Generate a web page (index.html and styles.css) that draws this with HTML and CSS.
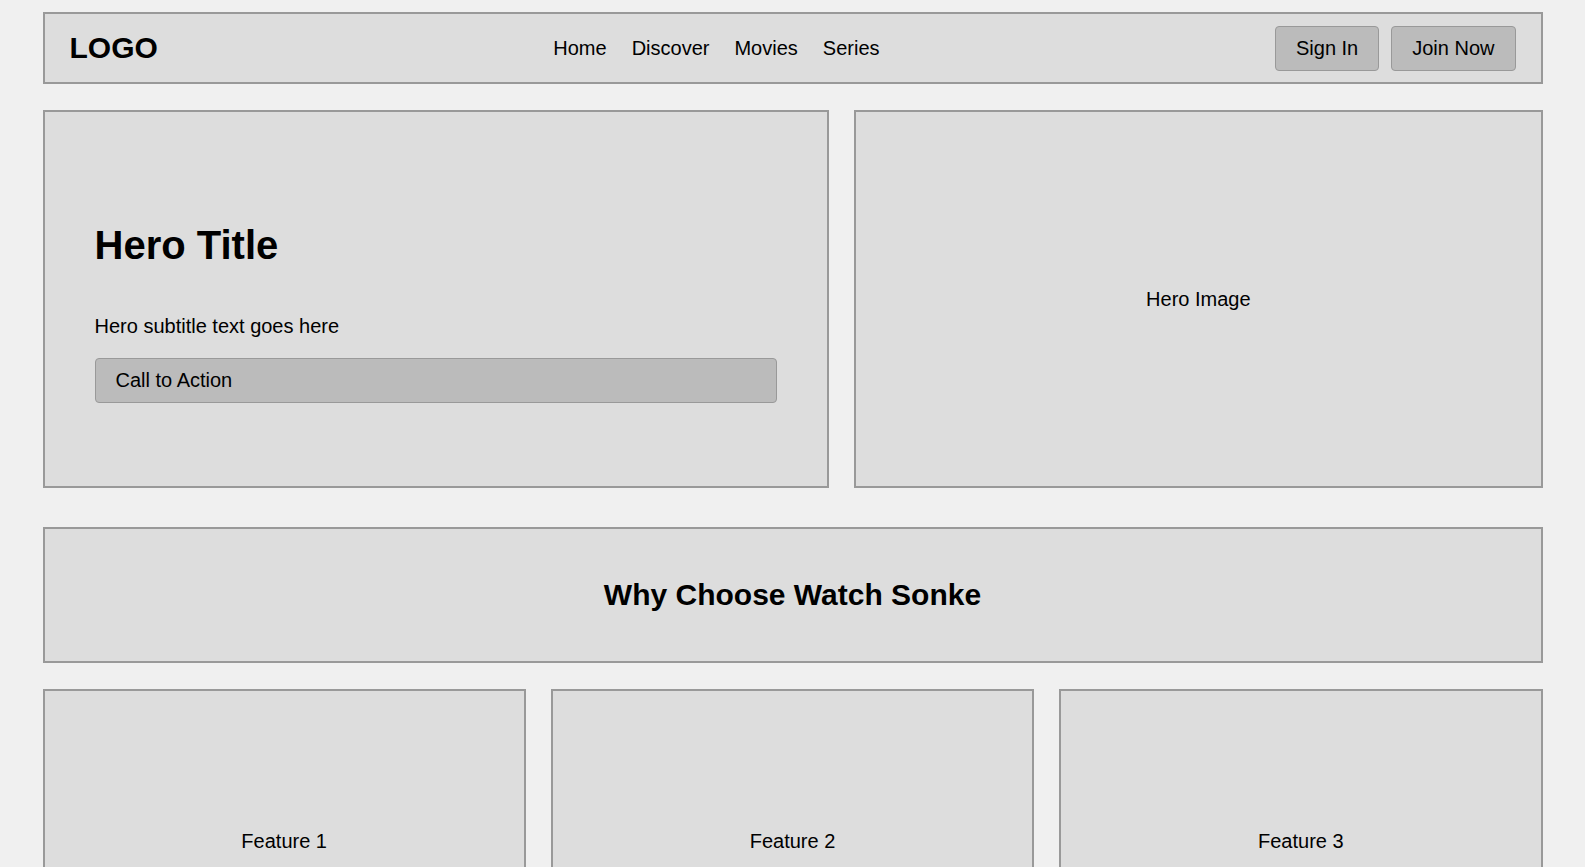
FILE: index.html
```html
<!DOCTYPE html>
<html lang="en">
<head>
<meta charset="utf-8">
<title>Watch Sonke</title>
<link rel="stylesheet" href="styles.css">
</head>
<body>
<div class="page">
  <header class="header">
    <div class="logo">LOGO</div>
    <nav class="nav">
      <a class="nav-link" href="#">Home</a>
      <a class="nav-link" href="#">Discover</a>
      <a class="nav-link" href="#">Movies</a>
      <a class="nav-link" href="#">Series</a>
    </nav>
    <div class="auth">
      <button class="btn">Sign In</button>
      <button class="btn">Join Now</button>
    </div>
  </header>

  <section class="hero">
    <div class="box hero-text">
      <h1 class="hero-title">Hero Title</h1>
      <p class="hero-sub">Hero subtitle text goes here</p>
      <button class="btn cta">Call to Action</button>
    </div>
    <div class="box hero-image">Hero Image</div>
  </section>

  <section class="box why">
    <h2 class="why-title">Why Choose Watch Sonke</h2>
  </section>

  <section class="features">
    <div class="box feature">Feature 1</div>
    <div class="box feature">Feature 2</div>
    <div class="box feature">Feature 3</div>
  </section>
</div>
</body>
</html>
```

FILE: styles.css
```css
* { box-sizing: border-box; }

html, body {
  margin: 0;
  padding: 0;
  background: #f0f0f0;
  color: #000;
  font-family: "Liberation Sans", Arial, sans-serif;
  font-size: 20px;
}

.page {
  width: 1500px;
  margin: 12px auto 0;
}

.box {
  background: #dddddd;
  border: 2px solid #999999;
}

.header {
  background: #dddddd;
  border: 2px solid #999999;
  height: 72px;
  padding: 0 25px;
  display: flex;
  align-items: center;
  justify-content: space-between;
}

.logo {
  font-size: 30px;
  font-weight: bold;
}

.nav {
  display: flex;
  gap: 25px;
}

.nav-link {
  color: #000;
  text-decoration: none;
  font-size: 20px;
}

.auth {
  display: flex;
  gap: 12px;
}

.btn {
  font-family: "Liberation Sans", Arial, sans-serif;
  font-size: 20px;
  line-height: 23px;
  color: #000;
  background: #bbbbbb;
  border: 1px solid #999999;
  border-radius: 4px;
  padding: 10px 20px;
  height: 45px;
}

.hero {
  margin-top: 26px;
  display: grid;
  grid-template-columns: 8fr 7fr;
  gap: 25px;
  height: 378px;
}

.hero-text {
  padding: 110px 50px 0;
  display: flex;
  flex-direction: column;
  justify-content: flex-start;
}

.hero-title {
  font-size: 40px;
  line-height: 46px;
  font-weight: bold;
  margin: 0;
}

.hero-sub {
  font-size: 20px;
  line-height: 23px;
  margin: 47px 0 20px;
}

.cta {
  width: 100%;
  text-align: left;
}

.hero-image {
  display: flex;
  align-items: center;
  justify-content: center;
}

.why {
  margin-top: 39px;
  height: 136px;
  display: flex;
  align-items: center;
  justify-content: center;
}

.why-title {
  margin: 0;
  font-size: 30px;
  line-height: 34px;
  font-weight: bold;
}

.features {
  margin-top: 26px;
  display: grid;
  grid-template-columns: repeat(3, 1fr);
  gap: 25px;
}

.feature {
  height: 305px;
  display: flex;
  align-items: center;
  justify-content: center;
}
```
